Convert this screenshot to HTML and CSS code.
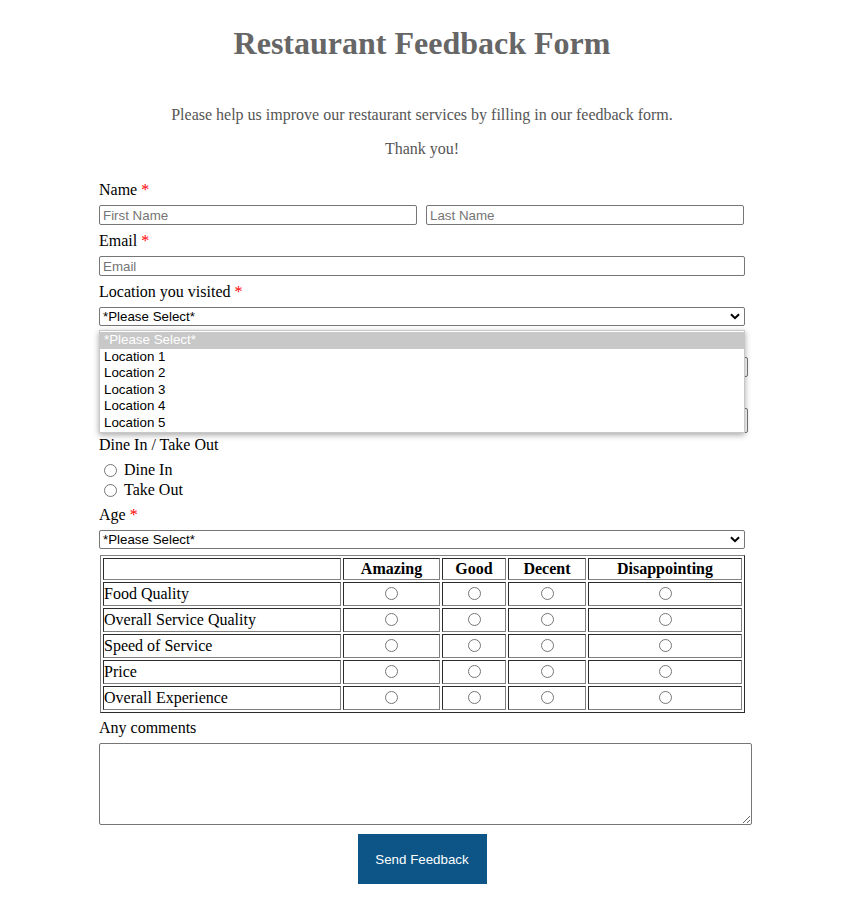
FILE: index.html
```html
<!DOCTYPE html>
<html>
<head>
<meta charset="utf-8">
<link rel="stylesheet" href="styles.css">
</head>
<body>
<div class="page">
  <h1 class="title">Restaurant Feedback Form</h1>
  <p class="intro intro-first">Please help us improve our restaurant services by filling in our feedback form.</p>
  <p class="intro intro-second">Thank you!</p>

  <form class="form">
    <div class="label">Name <span class="req">*</span></div>
    <div class="name-row">
      <input class="text name" type="text" placeholder="First Name">
      <input class="text name" type="text" placeholder="Last Name">
    </div>

    <div class="label">Email <span class="req">*</span></div>
    <input class="text full" type="text" placeholder="Email">

    <div class="label">Location you visited <span class="req">*</span></div>
    <div class="select-wrap">
      <div class="select full">*Please Select*<svg class="chev" width="10" height="7" viewBox="0 0 10 7"><path d="M1 1.2 L5 5.2 L9 1.2" fill="none" stroke="#000" stroke-width="2"/></svg></div>
      <ul class="menu">
        <li class="opt opt-active">*Please Select*</li>
        <li class="opt">Location 1</li>
        <li class="opt">Location 2</li>
        <li class="opt">Location 3</li>
        <li class="opt">Location 4</li>
        <li class="opt">Location 5</li>
      </ul>
    </div>

    <div class="label"></div>
    <input class="text wide" type="text">

    <div class="label"></div>
    <div class="select wide tall"><span></span><svg class="chev" width="10" height="7" viewBox="0 0 10 7"><path d="M1 1.2 L5 5.2 L9 1.2" fill="none" stroke="#000" stroke-width="2"/></svg></div>

    <div class="label">Dine In / Take Out</div>
    <div class="radios">
      <label class="radio-line"><input type="radio" name="dine" class="radio">Dine In</label>
      <label class="radio-line"><input type="radio" name="dine" class="radio">Take Out</label>
    </div>

    <div class="label">Age <span class="req">*</span></div>
    <div class="select full">*Please Select*<svg class="chev" width="10" height="7" viewBox="0 0 10 7"><path d="M1 1.2 L5 5.2 L9 1.2" fill="none" stroke="#000" stroke-width="2"/></svg></div>

    <table class="rating">
      <colgroup>
        <col class="c1"><col class="c2"><col class="c3"><col class="c4"><col class="c5">
      </colgroup>
      <tr class="head">
        <th></th><th>Amazing</th><th>Good</th><th>Decent</th><th>Disappointing</th>
      </tr>
      <tr><td class="item">Food Quality</td><td><input type="radio" name="r1" class="radio"></td><td><input type="radio" name="r1" class="radio"></td><td><input type="radio" name="r1" class="radio"></td><td><input type="radio" name="r1" class="radio"></td></tr>
      <tr><td class="item">Overall Service Quality</td><td><input type="radio" name="r2" class="radio"></td><td><input type="radio" name="r2" class="radio"></td><td><input type="radio" name="r2" class="radio"></td><td><input type="radio" name="r2" class="radio"></td></tr>
      <tr><td class="item">Speed of Service</td><td><input type="radio" name="r3" class="radio"></td><td><input type="radio" name="r3" class="radio"></td><td><input type="radio" name="r3" class="radio"></td><td><input type="radio" name="r3" class="radio"></td></tr>
      <tr><td class="item">Price</td><td><input type="radio" name="r4" class="radio"></td><td><input type="radio" name="r4" class="radio"></td><td><input type="radio" name="r4" class="radio"></td><td><input type="radio" name="r4" class="radio"></td></tr>
      <tr><td class="item">Overall Experience</td><td><input type="radio" name="r5" class="radio"></td><td><input type="radio" name="r5" class="radio"></td><td><input type="radio" name="r5" class="radio"></td><td><input type="radio" name="r5" class="radio"></td></tr>
    </table>

    <div class="label label-comments">Any comments</div>
    <textarea class="comments"></textarea>

    <div class="actions">
      <button type="button" class="send">Send Feedback</button>
    </div>
  </form>
</div>
</body>
</html>
```

FILE: styles.css
```css
html, body {
  margin: 0;
  padding: 0;
  background: #fff;
}
body {
  font-family: "Liberation Serif", "Times New Roman", serif;
  font-size: 16px;
  color: #000;
}
.page {
  width: 646px;
  margin-left: 99px;
  padding-top: 21px;
}
.title {
  margin: 0;
  text-align: center;
  font-size: 32px;
  line-height: 44px;
  font-weight: bold;
  color: #666;
}
.intro {
  margin: 0;
  text-align: center;
  color: #555;
  line-height: 18px;
}
.intro-first {
  margin-top: 41px;
}
.intro-second {
  margin-top: 16px;
}
.form {
  display: flex;
  flex-direction: column;
  margin-top: 23px;
}
.label {
  line-height: 18px;
  height: 18px;
  margin-bottom: 6px;
}
.req {
  color: #f00;
}
.name-row {
  display: flex;
  gap: 9px;
  margin-bottom: 7px;
}
.text {
  box-sizing: border-box;
  height: 20px;
  border: 1px solid #767676;
  border-radius: 2px;
  padding: 1px 3px;
  margin: 0 0 7px 0;
  font-family: "Liberation Sans", Arial, sans-serif;
  font-size: 13.33px;
  outline: none;
}
.name-row .text {
  margin: 0;
}
.text::placeholder {
  color: #757575;
}
.name {
  width: 318px;
}
.full {
  width: 646px;
}
.wide {
  width: 649px;
}
.select-wrap {
  position: relative;
  margin-bottom: 7px;
}
.select {
  box-sizing: border-box;
  height: 19px;
  border: 1px solid #767676;
  border-radius: 2px;
  padding: 0 3px;
  font-family: "Liberation Sans", Arial, sans-serif;
  font-size: 13.33px;
  line-height: 17px;
  display: flex;
  align-items: center;
  justify-content: space-between;
}
.select.tall {
  height: 25px;
  margin-bottom: 3px;
}
.chev {
  margin-right: 1px;
}
.menu {
  position: absolute;
  left: 0;
  top: 23px;
  width: 646px;
  box-sizing: border-box;
  margin: 0;
  padding: 1px 0;
  list-style: none;
  background: #fff;
  border: 1px solid #c8c8c8;
  box-shadow: 0 2px 6px rgba(0, 0, 0, 0.35);
  font-family: "Liberation Sans", Arial, sans-serif;
  font-size: 13.33px;
  z-index: 5;
}
.opt {
  height: 16.5px;
  line-height: 16.5px;
  padding-left: 4px;
  color: #000;
}
.opt-active {
  background: #c8c8c8;
  color: #fff;
}
.radios {
  display: flex;
  flex-direction: column;
  margin-bottom: 6px;
}
.radio-line {
  display: flex;
  align-items: center;
  height: 20px;
  line-height: 20px;
}
.radio {
  width: 13px;
  height: 13px;
  margin: 0 7px 0 5px;
  accent-color: #767676;
}
.rating {
  margin: 6px 0 0 1px;
  width: 645px;
  table-layout: fixed;
  border: 1px outset #808080;
  border-spacing: 2px;
}
.c1 { width: 238px; }
.c2 { width: 97px; }
.c3 { width: 64px; }
.c4 { width: 78px; }
.c5 { width: 154px; }
.rating th, .rating td {
  border: 1px inset #808080;
  padding: 1px;
  text-align: center;
  vertical-align: middle;
}
.rating th {
  height: 18px;
  font-weight: bold;
  line-height: 18px;
}
.rating td {
  height: 20px;
  line-height: 18px;
}
.rating td.item {
  text-align: left;
  padding-left: 0;
}
.rating .radio {
  margin: 0 0 3px 0;
  vertical-align: middle;
}
.label-comments {
  margin-top: 6px;
}
.comments {
  box-sizing: border-box;
  width: 653px;
  height: 82px;
  border: 1px solid #767676;
  border-radius: 2px;
  margin: 0;
  resize: both;
}
.actions {
  display: flex;
  justify-content: center;
  margin-top: 9px;
}
.send {
  width: 129px;
  height: 50px;
  border: none;
  background: #0c5586;
  color: #fff;
  font-family: "Liberation Sans", Arial, sans-serif;
  font-size: 13.33px;
  padding: 0;
}
```
